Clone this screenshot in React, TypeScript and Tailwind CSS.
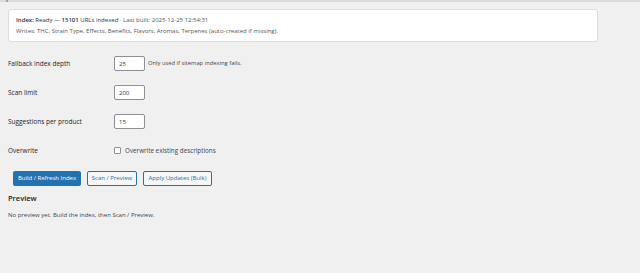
import React from "react";

type FieldRow = {
  label: string;
  value: string;
  hint?: string;
};

const fields: FieldRow[] = [
  { label: "Fallback index depth", value: "25", hint: "Only used if sitemap indexing fails." },
  { label: "Scan limit", value: "200" },
  { label: "Suggestions per product", value: "15" },
];

function NumberField({ value }: { value: string }) {
  return (
    <input
      type="text"
      defaultValue={value}
      className="h-[15px] w-[31px] rounded-[2px] border border-[#8c8f94] bg-white px-[4px] text-[6px] text-[#2c3338] outline-none"
    />
  );
}

export default function App() {
  return (
    <main
      className="min-h-[273px] w-[640px] bg-[#f0f0f1] text-[#1d2327]"
      style={{ fontFamily: '"Open Sans", "Noto Sans", Arial, sans-serif' }}
    >
      <div className="relative h-[2px] bg-[#dcdcde]">
        <div className="absolute left-[6px] top-0 h-[2px] w-[2px] bg-[#8fb08f]" />
      </div>

      <div className="px-[8px] pt-[7px]">
        <div className="w-[590px] rounded-[3px] border border-[#dcdcde] bg-white px-[7px] pb-[4px] pt-[5px] text-[6px] leading-[11px] text-[#50575e]">
          <p>
            <span className="font-semibold text-[#2c3338]">Index:</span>{" "}
            <span className="text-[#2c3338]">Ready — </span>
            <span className="font-semibold text-[#2c3338]">15101</span>{" "}
            <span className="text-[#2c3338]">URLs indexed</span> · Last built:
            2025-12-25 12:54:31
          </p>
          <p>
            Writes: THC, Strain Type, Effects, Benefits, Flavors, Aromas,
            Terpenes (auto-created if missing).
          </p>
        </div>

        <div className="mt-[14px] flex flex-col gap-[14px]">
          {fields.map((row) => (
            <div key={row.label} className="flex h-[15px] items-center">
              <span className="w-[106px] text-[6.5px] font-medium text-[#1d2327]">
                {row.label}
              </span>
              <NumberField value={row.value} />
              {row.hint && (
                <span className="ml-[3px] text-[5.8px] text-[#3c434a]">
                  {row.hint}
                </span>
              )}
            </div>
          ))}
          <div className="flex h-[15px] items-center">
            <span className="w-[106px] text-[6.5px] font-medium text-[#1d2327]">
              Overwrite
            </span>
            <span className="h-[7px] w-[7px] rounded-[1px] border border-[#8c8f94] bg-white" />
            <span className="ml-[4px] text-[6.3px] text-[#3c434a]">
              Overwrite existing descriptions
            </span>
          </div>
        </div>

        <div className="ml-[5px] mt-[13px] flex gap-[6px]">
          <button className="h-[15px] w-[68px] rounded-[2px] bg-[#2271b1] text-[6px] text-white">
            Build / Refresh Index
          </button>
          <button className="h-[15px] w-[50px] rounded-[2px] border border-[#2271b1] bg-[#f6f7f7] text-[6px] text-[#2271b1]">
            Scan / Preview
          </button>
          <button className="h-[15px] w-[69px] rounded-[2px] border border-[#2271b1] bg-[#f6f7f7] text-[6px] text-[#2271b1]">
            Apply Updates (Bulk)
          </button>
        </div>

        <h2 className="mt-[5px] text-[7.5px] font-semibold leading-[14px] text-[#1d2327]">
          Preview
        </h2>
        <p className="mt-[6px] text-[6px] text-[#3c434a]">
          No preview yet. Build the index, then Scan / Preview.
        </p>
      </div>
    </main>
  );
}
